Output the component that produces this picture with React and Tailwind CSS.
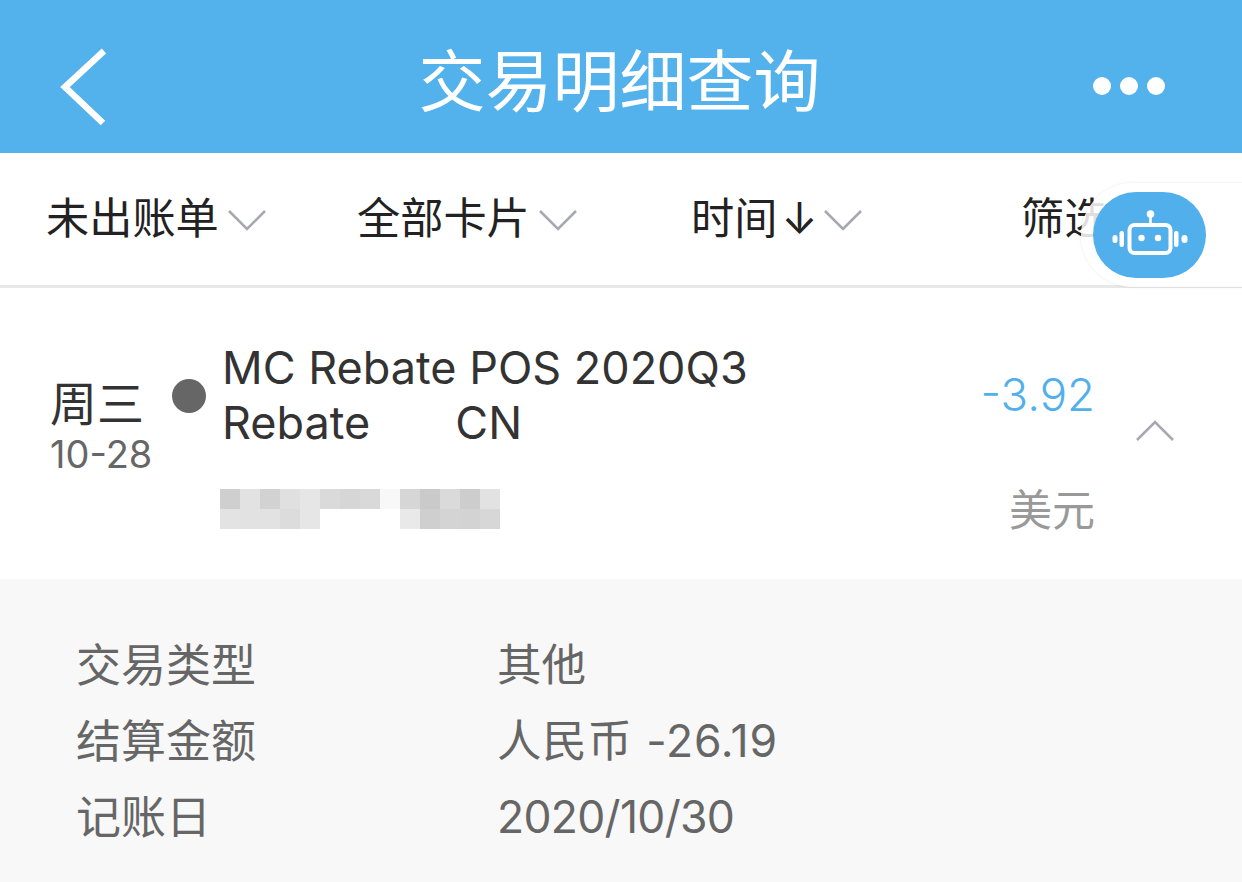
import React from "react";

const sans = { fontFamily: 'Inter, "Noto Sans CJK SC", sans-serif' };

function Chevron({ up = false }) {
  return (
    <svg width="38" height="24" viewBox="0 0 38 24" fill="none" stroke="#a6a8b2" strokeWidth="2.6">
      <path d={up ? "M1 22 L19 4 L37 22" : "M1 3 L19 21 L37 3"} />
    </svg>
  );
}

function Robot() {
  return (
    <svg width="78" height="50" viewBox="0 0 78 50" fill="none">
      <circle cx="39.5" cy="4" r="3.8" fill="white" />
      <path d="M39.5 7 V14" stroke="white" strokeWidth="2.6" />
      <rect x="18.5" y="15" width="41" height="28" rx="5" stroke="white" strokeWidth="4" />
      <circle cx="30.5" cy="28" r="3.2" fill="white" />
      <circle cx="47" cy="28" r="3.2" fill="white" />
      <rect x="8.5" y="21" width="4.5" height="16" rx="2.2" fill="white" />
      <rect x="63" y="21" width="4.5" height="16" rx="2.2" fill="white" />
      <rect x="1.5" y="25" width="5" height="8" rx="2.5" fill="white" />
      <rect x="70.5" y="25" width="6" height="8" rx="3" fill="white" />
    </svg>
  );
}

const row1 = ["#cfcfcf","#e2e2e2","#d2d2d2","#e0e0e0","#e6e6e6","#dadada","#d6d6d6","#d9d9d9","#f8f8f8","#d6d6d6","#cacaca","#dadada","#cdcdcd","#e2e2e2"];
const row2 = ["#e3e3e3","#e2e2e2","#e2e2e2","#dcdcdc","#e6e6e6","#ffffff","#ffffff","#ffffff","#ffffff","#e9e9e9","#cfcfcf","#d4d4d4","#d3d3d3","#d7d7d7"];

function Tab({ label, className, children }) {
  return (
    <div className={`flex items-center text-[43.2px] leading-none text-[#222] ${className}`}>
      <span className="[word-spacing:-8px]">{label}</span>
      {children}
    </div>
  );
}

function Detail({ label, value, valueClass = "" }) {
  return (
    <div className="flex items-center h-[76px] leading-none text-[#666]">
      <span className="w-[421px] text-[45px]">{label}</span>
      <span className={`text-[44.5px] ${valueClass}`}>{value}</span>
    </div>
  );
}

export default function App() {
  return (
    <div className="relative w-[1242px] h-[882px] overflow-hidden bg-white" style={sans}>
      <header className="flex items-center justify-between h-[153px] bg-[#53b1ec] pl-[60px] pr-[77px]">
        <svg width="46" height="78" viewBox="0 0 46 78" fill="none" stroke="white" strokeWidth="6.5" className="mt-[21px]">
          <path d="M44 3 L5 39 L43 75" />
        </svg>
        <h1 className="text-[67px] font-normal leading-none text-white ml-[40px] mt-[10px]">交易明细查询</h1>
        <div className="flex gap-[9px] mt-[19px]">
          <span className="w-[18px] h-[18px] rounded-full bg-white" />
          <span className="w-[18px] h-[18px] rounded-full bg-white" />
          <span className="w-[18px] h-[18px] rounded-full bg-white" />
        </div>
      </header>

      <nav className="flex items-center h-[135px] border-b-[3px] border-[#e8e8e8] pl-[46px]">
        <Tab label="未出账单" className="w-[311px]"><span className="ml-[9px] mt-[2px] flex"><Chevron /></span></Tab>
        <Tab label="全部卡片" className="w-[334px]"><span className="ml-[9px] mt-[2px] flex"><Chevron /></span></Tab>
        <Tab label="时间 ↓" className="w-[330px]"><span className="ml-[6px] mt-[2px] flex"><Chevron /></span></Tab>
        <Tab label="筛选" />
      </nav>

      <section className="flex h-[291px] pl-[50px] pr-[68px]">
        <div className="w-[122px] pt-[89px]">
          <div className="text-[47px] leading-[54px] text-[#333]">周三</div>
          <div className="text-[38px] leading-[44px] text-[#666] mt-[1px]">10-28</div>
        </div>
        <span className="w-[34px] h-[34px] rounded-full bg-[#666] mt-[91px]" />
        <div className="ml-[16px] flex-1 pt-[52px]">
          <div className="text-[45px] leading-[55px] text-[#333] whitespace-pre">
            MC Rebate POS 2020Q3{"\n"}Rebate{"      "}<span className="ml-[9px]">CN</span>
          </div>
          <div className="mt-[39px] ml-[-2px] w-[280px]">
            <div className="flex">{row1.map((c, i) => <span key={i} className="w-[20px] h-[20px]" style={{ backgroundColor: c }} />)}</div>
            <div className="flex">{row2.map((c, i) => <span key={i} className="w-[20px] h-[20px]" style={{ backgroundColor: c }} />)}</div>
          </div>
        </div>
        <div className="flex flex-col items-end pt-[79px]">
          <div className="text-[45.5px] leading-[56px] text-[#51b0ec] font-light">-3.92</div>
          <div className="text-[43px] leading-none text-[#999] mt-[66px]">美元</div>
        </div>
        <div className="ml-[41px] pt-[130px]"><Chevron up /></div>
      </section>

      <section className="h-[303px] bg-[#f8f8f8] pl-[76px] pt-[48px]">
        <Detail label="交易类型" value="其他" />
        <Detail label="结算金额" value="人民币 -26.19" valueClass="tracking-[0.8px]" />
        <Detail label="记账日" value="2020/10/30" valueClass="tracking-[-0.7px]" />
      </section>

      <div className="absolute left-[1081px] top-[183px] w-[200px] h-[104px] rounded-l-[52px] bg-white/85 shadow-[0_0_3px_rgba(0,0,0,0.1)]" />
      <button className="absolute left-[1093px] top-[192px] w-[113px] h-[86px] rounded-[43px] bg-[#51b0ec] flex items-center justify-center">
        <Robot />
      </button>
    </div>
  );
}
